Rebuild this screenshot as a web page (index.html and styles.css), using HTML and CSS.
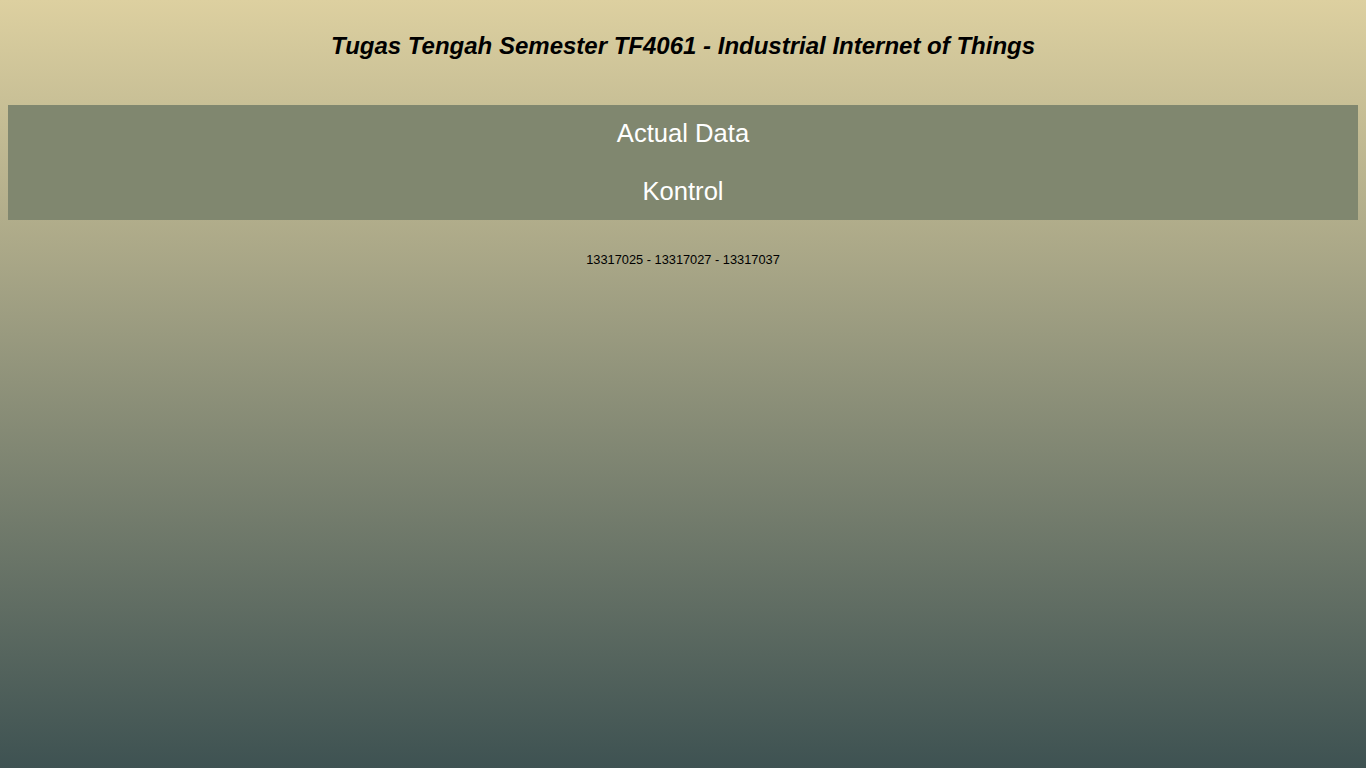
FILE: index.html
```html
<!DOCTYPE html>
<html lang="id">
<head>
<meta charset="utf-8">
<title>Tugas Tengah Semester TF4061</title>
<link rel="stylesheet" href="styles.css">
</head>
<body>
<header class="header">
  <h1 class="title">Tugas Tengah Semester TF4061 - Industrial Internet of Things</h1>
</header>
<nav class="menu">
  <a class="menu-item" href="#">Actual Data</a>
  <a class="menu-item" href="#">Kontrol</a>
</nav>
<footer class="footer">13317025 - 13317027 - 13317037</footer>
</body>
</html>
```

FILE: styles.css
```css
html {
  height: 100%;
}
body {
  margin: 0;
  padding: 0 8px;
  min-height: 100%;
  box-sizing: border-box;
  font-family: "Liberation Sans", Arial, sans-serif;
  background: linear-gradient(to bottom, #ddd0a0 0%, #a7a586 35%, #3e5252 100%);
  background-attachment: fixed;
}
.header {
  padding: 32px 0 45px;
}
.title {
  margin: 0;
  text-align: center;
  font-size: 24px;
  line-height: 28px;
  font-weight: bold;
  font-style: italic;
  color: #000;
}
.menu {
  display: flex;
  flex-direction: column;
  background: #80876f;
}
.menu-item {
  display: block;
  text-align: center;
  color: #fff;
  text-decoration: none;
  font-size: 25.6px;
  line-height: 57.5px;
}
.footer {
  margin-top: 32px;
  text-align: center;
  font-size: 12.8px;
  line-height: 15px;
  color: #000;
}
```
